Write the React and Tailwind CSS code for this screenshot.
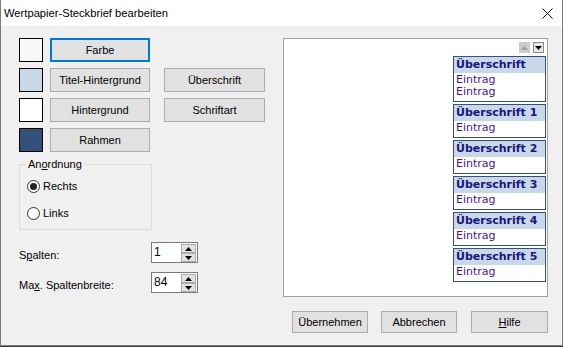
const Btn = ({ children, className = "", focused }) => (
  <div
    className={`flex items-center justify-center bg-[#e1e1e1] text-[11px] leading-[13px] ${
      focused ? "border-2 border-[#0078d7]" : "border border-[#adadad]"
    } ${className}`}
  >
    {children}
  </div>
);

const Row = ({ color, label, second, focused }) => (
  <div className="flex items-center h-[24px]">
    <div className="w-[24px] h-[24px] border border-black" style={{ backgroundColor: color }} />
    <Btn focused={focused} className="ml-[7px] w-[100px] h-[24px]">{label}</Btn>
    {second && <Btn className="ml-[14px] w-[101px] h-[24px]">{second}</Btn>}
  </div>
);

const Radio = ({ checked, label }) => (
  <div className="flex items-center h-[14px]">
    <div className="w-[13px] h-[13px] rounded-full border border-[#333] bg-white flex items-center justify-center">
      {checked && <div className="w-[7px] h-[7px] rounded-full bg-[#222]" />}
    </div>
    <span className="ml-[3px] text-[11px] leading-[13px]">{label}</span>
  </div>
);

const Tri = ({ up, color = "#000" }) => (
  <svg width="7" height="4" viewBox="0 0 7 4">
    {up ? <polygon points="0,4 7,4 3.5,0" fill={color} /> : <polygon points="0,0 7,0 3.5,4" fill={color} />}
  </svg>
);

const Spin = ({ value }) => (
  <div className="w-[47px] h-[21px] border border-[#7a7a7a] bg-white flex">
    <div className="flex-1 pl-[2px] text-[12px] leading-[19px]">{value}</div>
    <div className="flex flex-col mr-[1px] mt-[1px]">
      <div className="w-[15px] h-[9px] bg-[#e1e1e1] border border-[#adadad] flex items-center justify-center">
        <Tri up />
      </div>
      <div className="w-[15px] h-[9px] bg-[#e1e1e1] border border-[#adadad] flex items-center justify-center">
        <Tri />
      </div>
    </div>
  </div>
);

const Card = ({ title, entries }) => (
  <div className="w-[93px] border border-[#33507a] bg-white font-['DejaVu_Sans',Verdana,sans-serif]">
    <div className="bg-[#c8d8e8] h-[16px] pl-[2px] text-[11px] leading-[16px] font-bold text-[#1a1480]">{title}</div>
    <div className="pl-[2px] pt-[1px] pb-[3px]">
      {entries.map((e, i) => (
        <div key={i} className="text-[11px] leading-[12px] text-[#46148f]">{e}</div>
      ))}
    </div>
  </div>
);

export default function App() {
  return (
    <div className="w-[563px] h-[347px] bg-[#3c3c3c] font-['Liberation_Sans',Arial,sans-serif] text-black">
      <div className="w-[563px] h-[346px] flex flex-col border-x border-b border-[#7a7a7a] bg-[#f0f0f0]">
        <div className="h-[26px] shrink-0 bg-white flex items-center pl-[3px] pr-[9px]">
          <span className="flex-1 text-[11.2px] leading-[14px]">Wertpapier-Steckbrief bearbeiten</span>
          <svg width="11" height="11" viewBox="0 0 11 11">
            <path d="M0.5 0.5 L10.5 10.5 M10.5 0.5 L0.5 10.5" stroke="#000" strokeWidth="1" />
          </svg>
        </div>
        <div className="flex pl-[18px] pt-[12px]">
          <div className="w-[264px] flex flex-col">
            <div className="flex flex-col gap-[6px]">
              <Row color="#f9f9f7" label="Farbe" focused />
              <Row color="#c8d8e6" label="Titel-Hintergrund" second="Überschrift" />
              <Row color="#ffffff" label="Hintergrund" second="Schriftart" />
              <Row color="#34507a" label="Rahmen" />
            </div>
            <div className="relative mt-[12px] w-[133px] h-[66px] border border-[#dcdcdc] pl-[7px] pt-[14px] flex flex-col gap-[13px]">
              <span className="absolute left-[6px] -top-[7px] bg-[#f0f0f0] px-[2px] text-[11px] leading-[13px]">
                An<span className="underline">o</span>rdnung
              </span>
              <Radio checked label="Rechts" />
              <Radio label="Links" />
            </div>
            <div className="flex items-start mt-[12px]">
              <span className="w-[132px] mt-[7px] text-[11px] leading-[13px]">S<span className="underline">p</span>alten:</span>
              <Spin value="1" />
            </div>
            <div className="flex items-start mt-[9px]">
              <span className="w-[132px] mt-[7px] text-[11px] leading-[13px]">Ma<span className="underline">x</span>. Spaltenbreite:</span>
              <Spin value="84" />
            </div>
          </div>
          <div className="w-[265px] flex flex-col">
            <div className="h-[259px] border border-[#a0a0a0] bg-white flex flex-col items-end pt-[3px] pr-[1px]">
              <div className="flex gap-[3px] mr-[2px]">
                <div className="w-[11px] h-[11px] bg-[#cccccc] flex items-center justify-center">
                  <Tri up color="#a0a0a0" />
                </div>
                <div className="w-[11px] h-[11px] bg-[#e6e6e6] border border-[#8a8a8a] flex items-center justify-center">
                  <Tri />
                </div>
              </div>
              <div className="mt-[3px] flex flex-col gap-[2px]">
                <Card title="Überschrift" entries={["Eintrag", "Eintrag"]} />
                <Card title="Überschrift 1" entries={["Eintrag"]} />
                <Card title="Überschrift 2" entries={["Eintrag"]} />
                <Card title="Überschrift 3" entries={["Eintrag"]} />
                <Card title="Überschrift 4" entries={["Eintrag"]} />
                <Card title="Überschrift 5" entries={["Eintrag"]} />
              </div>
            </div>
            <div className="flex justify-end mt-[14px]">
              <Btn className="w-[76px] h-[22px]">Übernehmen</Btn>
              <Btn className="ml-[13px] w-[76px] h-[22px]">Abbrechen</Btn>
              <Btn className="ml-[14px] w-[77px] h-[22px]">
                <span><span className="underline">H</span>ilfe</span>
              </Btn>
            </div>
          </div>
        </div>
      </div>
    </div>
  );
}
